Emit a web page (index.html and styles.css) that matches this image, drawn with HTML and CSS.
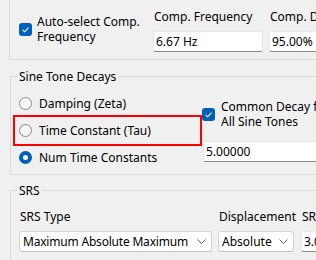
FILE: index.html
```html
<!DOCTYPE html>
<html>
<head>
<meta charset="utf-8">
<link rel="stylesheet" href="styles.css">
</head>
<body>
<div class="page">
  <div class="group group-top">
    <div class="top-row">
      <div class="check check-auto">
        <span class="box"><svg viewBox="0 0 13 13" width="13" height="13"><path d="M3.6 6.8 5.7 8.8 9.5 4.7" fill="none" stroke="#fff" stroke-width="1.1"/></svg></span>
        <span class="check-text">Auto-select Comp.<br>Frequency</span>
      </div>
      <div class="field field-freq">
        <div class="field-label">Comp. Frequency</div>
        <div class="textbox">6.67 Hz</div>
      </div>
      <div class="field field-damp">
        <div class="field-label">Comp. Damping</div>
        <div class="textbox">95.00%</div>
      </div>
    </div>
  </div>

  <fieldset class="group group-sine">
    <legend>Sine Tone Decays</legend>
    <div class="sine-body">
      <div class="radios">
        <div class="radio-row"><span class="radio"></span>Damping (Zeta)</div>
        <div class="radio-row highlight"><span class="radio"></span>Time Constant (Tau)</div>
        <div class="radio-row"><span class="radio checked"></span>Num Time Constants</div>
      </div>
      <div class="common">
        <div class="check check-common">
          <span class="box"><svg viewBox="0 0 13 13" width="13" height="13"><path d="M3.6 6.8 5.7 8.8 9.5 4.7" fill="none" stroke="#fff" stroke-width="1.1"/></svg></span>
          <span class="check-text">Common Decay for<br>All Sine Tones</span>
        </div>
        <div class="textbox textbox-common">5.00000</div>
      </div>
    </div>
  </fieldset>

  <fieldset class="group group-srs">
    <legend>SRS</legend>
    <div class="srs-row">
      <div class="field field-type">
        <div class="field-label">SRS Type</div>
        <div class="combo"><span class="combo-text tight">Maximum Absolute Maximum</span><svg class="chev" viewBox="0 0 9 5" width="9" height="5"><path d="M0.5 0.5 4.5 4.5 8.5 0.5" fill="none" stroke="#666" stroke-width="1"/></svg></div>
      </div>
      <div class="field field-disp">
        <div class="field-label">Displacement</div>
        <div class="combo"><span class="combo-text">Absolute</span><svg class="chev" viewBox="0 0 9 5" width="9" height="5"><path d="M0.5 0.5 4.5 4.5 8.5 0.5" fill="none" stroke="#666" stroke-width="1"/></svg></div>
      </div>
      <div class="field field-q">
        <div class="field-label">SRS Q</div>
        <div class="textbox">3.00</div>
      </div>
    </div>
  </fieldset>
</div>
</body>
</html>
```

FILE: styles.css
```css
html, body {
  margin: 0;
  padding: 0;
  background: #f0f0f0;
}
.page {
  width: 316px;
  height: 260px;
  overflow: hidden;
  font-family: "Noto Sans", "Open Sans", sans-serif;
  font-size: 12px;
  line-height: 15px;
  color: #000;
  background: #f0f0f0;
}
.group {
  border: 1px solid #dadada;
}
.group-top {
  margin: -10px -60px 0 9px;
  padding: 18px 0 7px 9px;
}
.top-row {
  display: flex;
  align-items: flex-start;
}
.top-row > * { flex: none; }
.check {
  display: flex;
  align-items: center;
}
.box {
  width: 13px;
  height: 13px;
  border-radius: 3px;
  background: #005fb8;
  flex: none;
  display: block;
}
.box svg { display: block; }
.check-auto {
  width: 134px;
  margin-top: 5px;
}
.check-auto .check-text {
  margin-left: 5px;
}
.field {
  display: flex;
  flex-direction: column;
}
.field-freq {
  width: 110px;
  margin-right: 6px;
}
.field-damp {
  width: 110px;
}
.field-label {
  white-space: nowrap;
  margin-left: 1px;
}
.textbox {
  box-sizing: border-box;
  height: 21px;
  margin-top: 7px;
  background: #fff;
  border: 1px solid #e6e6e6;
  border-bottom-color: #8a8a8a;
  border-radius: 2px;
  padding: 2px 0 0 2px;
  white-space: nowrap;
  overflow: hidden;
}

fieldset.group {
  margin: 0 -60px 0 10px;
  padding: 0;
  min-width: 0;
}
fieldset.group legend {
  margin-left: 6px;
  padding: 0 2px;
  line-height: 15px;
}
.group-sine {
  margin-top: 9px !important;
}
.sine-body {
  display: flex;
  padding: 6px 0 3px 4px;
}
.sine-body > * { flex: none; }
.radios {
  width: 185px;
}
.radio-row {
  height: 27px;
  display: flex;
  align-items: center;
  padding-left: 4px;
  white-space: nowrap;
}
.radio-row.highlight {
  outline: 2px solid #ff0000;
}
.radio {
  box-sizing: border-box;
  width: 13px;
  height: 13px;
  border-radius: 50%;
  border: 1px solid #8c8c8c;
  background: #f7f7f7;
  margin-right: 7px;
  flex: none;
}
.radio.checked {
  border: 4px solid #005fb8;
  background: #fff;
}
.common {
  margin-left: 2px;
  width: 140px;
}
.check-common {
  margin-top: 9px;
  white-space: nowrap;
}
.check-common .check-text {
  margin-left: 6px;
}
.textbox-common {
  margin-top: 12px;
  margin-left: 1px;
}

.group-srs {
  margin-top: 8px !important;
  height: 100px;
}
.srs-row {
  display: flex;
  padding: 11px 0 0 8px;
}
.srs-row > * { flex: none; }
.field-type {
  width: 193px;
  margin-right: 6px;
}
.field-disp {
  width: 76px;
  margin-right: 7px;
}
.field-q {
  width: 60px;
}
.combo {
  box-sizing: border-box;
  height: 21px;
  margin-top: 7px;
  background: #fff;
  border: 1px solid #d4d4d4;
  border-bottom-color: #c4c4c4;
  border-radius: 3px;
  display: flex;
  align-items: center;
  padding: 0 5px 0 3px;
  white-space: nowrap;
}
.combo-text {
  flex: 1;
  min-width: 0;
  overflow: hidden;
}
.combo-text.tight {
  letter-spacing: -0.2px;
}
.chev { display: block; flex: none; margin-left: 3px; }
```
